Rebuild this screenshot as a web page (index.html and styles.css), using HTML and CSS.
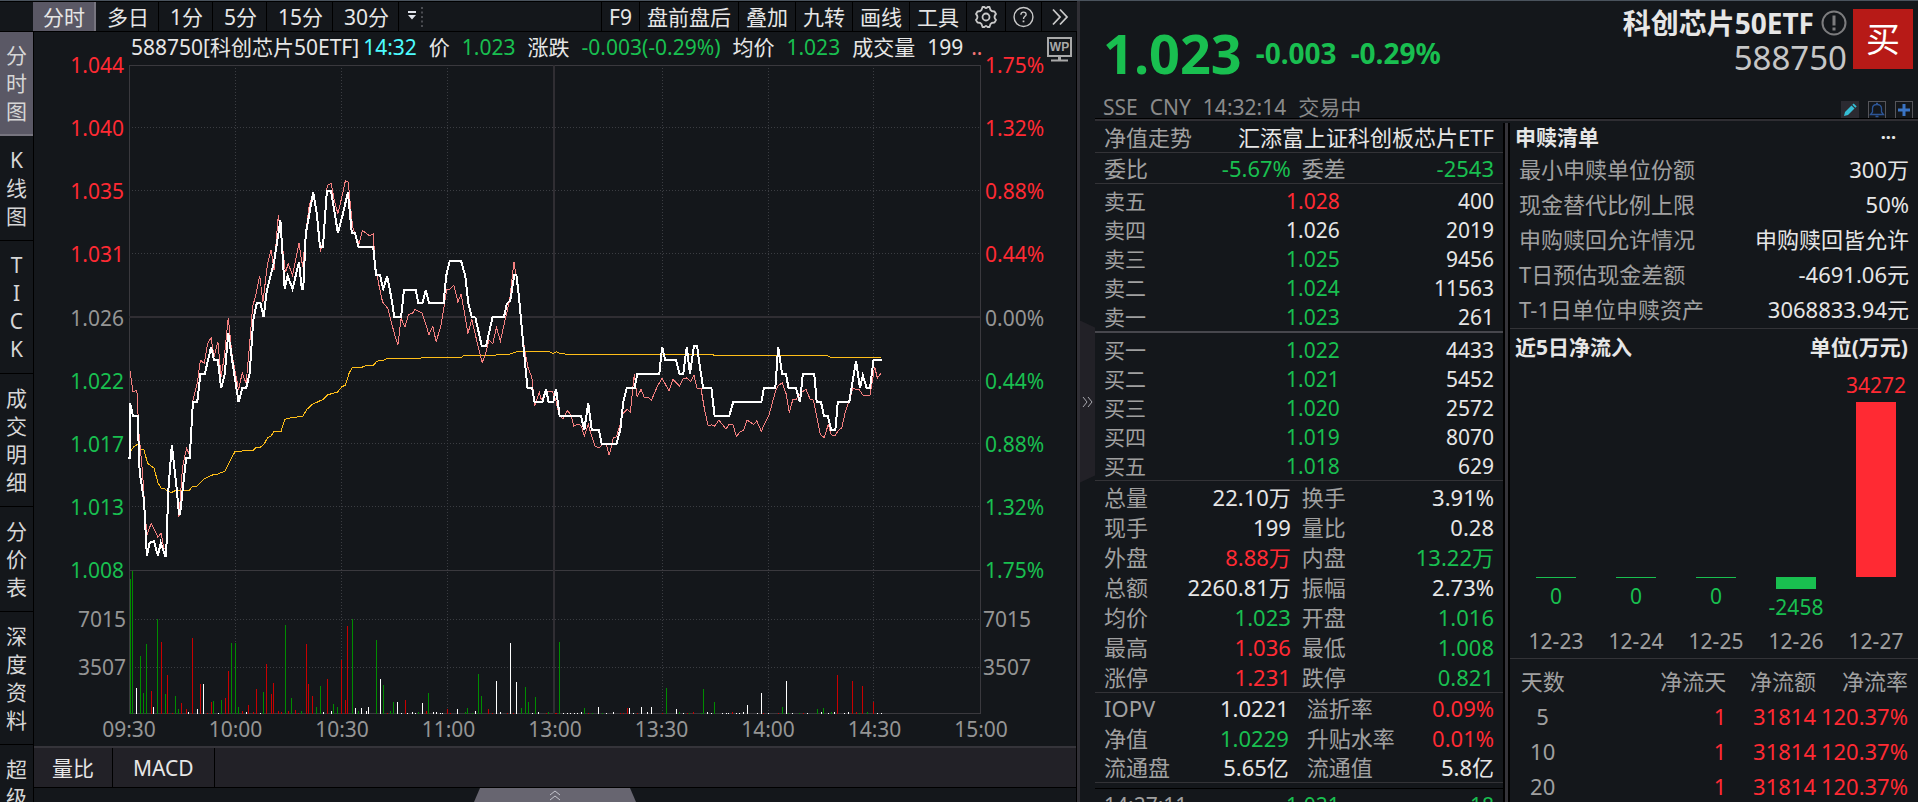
FILE: index.html
```
<!DOCTYPE html>
<html lang="zh-CN">
<head>
<meta charset="utf-8">
<title>588750 科创芯片50ETF</title>
<link rel="stylesheet" href="styles.css">
</head>
<body>
<div class="app">

<main class="left">
  <nav class="toolbar">
    <button class="tab active">分时</button><button class="tab">多日</button><button class="tab">1分</button><button class="tab">5分</button><button class="tab">15分</button><button class="tab">30分</button>
    <button class="more-periods" aria-label="更多周期"><svg width="18" height="22" viewBox="0 0 18 22"><path d="M1 5h8v2H1zM1 9h8L5 13.500z" fill="#dfe3ea"/><path d="M15 1v22" stroke="#4b4d52" stroke-width="2" stroke-dasharray="2 2.500"/></svg></button>
    <span class="spacer"></span>
    <button class="tool">F9</button><button class="tool">盘前盘后</button><button class="tool">叠加</button><button class="tool">九转</button><button class="tool">画线</button><button class="tool">工具</button>
    <button class="tool icon settings" aria-label="设置"><svg width="24" height="24" viewBox="0 0 24 24" fill="none" stroke="#c9c9c9" stroke-width="1.800" stroke-linejoin="round"><path d="M8.500 2h2c1 1.500 2 1.500 3 0h2l1 3c.7 1.200 1.500 1.500 4 1.500l1.500 2.500c-2 2-2 4 0 6L20.500 17.500c-2.500 0-3.300.4-4 1.500l-1 3h-2c-1-1.500-2-1.500-3 0h-2l-1-3c-.7-1.100-1.500-1.500-4-1.500L2 15c2-2 2-4 0-6l1.500-2.500c2.500 0 3.300-.3 4-1.500z"/><circle cx="12" cy="12" r="3.500"/></svg></button>
    <button class="tool icon" aria-label="帮助"><svg width="24" height="24" viewBox="0 0 24 24" fill="none" stroke="#c9c9c9" stroke-width="1.600"><circle cx="12" cy="12" r="10.800"/><path d="M9 9.500c0-4 6-4 6-.5 0 2.200-3 2.300-3 5.200"/><path d="M12 16v2" stroke-width="2"/></svg></button>
    <button class="tool icon" aria-label="展开"><svg width="18" height="18" viewBox="0 0 18 18" fill="none" stroke="#c9c9c9" stroke-width="1.800"><path d="M2 1.500 9 9l-7 7.500M9 1.500 16 9l-7 7.500"/></svg></button>
  </nav>

  <div class="work">
    <nav class="side">
      <button class="side-tab active">分<br>时<br>图</button>
      <button class="side-tab">K<br>线<br>图</button>
      <button class="side-tab">T<br>I<br>C<br>K</button>
      <button class="side-tab">成<br>交<br>明<br>细</button>
      <button class="side-tab">分<br>价<br>表</button>
      <button class="side-tab">深<br>度<br>资<br>料</button>
      <button class="side-tab">超<br>级</button>
    </nav>

    <section class="stage">
      <div class="info">
        <span class="info-name">588750[科创芯片50ETF]</span>
        <span class="cyan">14:32</span>
        <span>价</span><span class="down">1.023</span>
        <span>涨跌</span><span class="down">-0.003(-0.29%)</span>
        <span>均价</span><span class="down">1.023</span>
        <span>成交量</span><span>199</span><span class="salmon">..</span>
        <svg class="wp" width="25" height="25" viewBox="0 0 25 25"><rect x="1" y="1" width="23" height="18" fill="none" stroke="#a9a9a9" stroke-width="2"/><path d="M11 20h3v3h-3zM4 22.500h17v2H4z" fill="#a9a9a9"/><text x="12.500" y="14" text-anchor="middle">WP</text></svg>
      </div>

      <div class="chart">
        <div class="axis price left-axis"><span class="up">1.044</span><span class="up">1.040</span><span class="up">1.035</span><span class="up">1.031</span><span>1.026</span><span class="down">1.022</span><span class="down">1.017</span><span class="down">1.013</span><span class="down">1.008</span></div>
        <div class="axis volume left-axis"><span>7015</span><span>3507</span></div>

        <svg class="plot" viewBox="0 0 2386 1950" preserveAspectRatio="none" role="img" aria-label="分时走势">
          <path class="dots" d="M0 189H2384M0 378H2384M0 567H2384M0 948H2384M0 1137H2384M0 1326H2384M0 1665H2384M0 1809H2384M297 0V1950M594 0V1950M891 0V1950M1493 0V1950M1790 0V1950M2086 0V1950"/>
          <path class="frame" d="M0 1950V0H2384V1950ZM0 1518H2384"/>
          <path class="mid" d="M0 758H2384M1190 0V1950"/>
          <g transform="translate(-362 1487)">
            <path class="vol-down" d="M365 57V463M373 33V463M393 288V463M404 399V463M412 252V463M443 177V463M463 402V463M491 408V463M502 447V463M600 423V463M620 420V463M650 249V463M659 249V463M670 441V463M740 396V463M799 195V463M818 414V463M846 453V463M886 441V463M897 378V463M936 432V463M947 441V463M987 177V463M1005 453V463M1054 240V463M1074 375V463M1093 453V463M1104 426V463M1174 456V463M1202 399V463M1303 456V463M1311 444V463M1323 459V463M1342 342V463M1350 408V463M1460 444V463M1471 381V463M1480 426V463M1499 411V463M1538 456V463"/>
            <path class="vol-up" d="M424 393V463M452 246V463M471 345V463M483 459V463M510 429V463M522 447V463M541 234V463M561 372V463M581 459V463M592 426V463M631 414V463M640 333V463M679 453V463M698 435V463M710 456V463M718 387V463M748 312V463M760 402V463M768 369V463M780 453V463M788 456V463M808 453V463M827 450V463M838 459V463M858 252V463M866 372V463M877 408V463M917 357V463M956 300V463M967 420V463M975 198V463M1085 459V463M1135 420V463M1194 453V463M1253 447V463M1262 459V463M1370 447V463M1381 459V463M1421 459V463M1440 459V463M1530 459V463M1557 459V463"/>
            <path class="vol-flat" d="M384 384V463M432 441V463M530 456V463M553 447V463M572 372V463M612 459V463M690 456V463M730 459V463M906 456V463M928 453V463M995 444V463M1014 444V463M1026 453V463M1034 441V463M1065 357V463M1115 426V463M1124 459V463M1143 459V463M1155 456V463M1163 459V463M1183 429V463M1214 456V463M1222 456V463M1233 459V463M1241 459V463M1283 447V463M1331 453V463M1390 363V463M1401 456V463M1429 249V463M1448 366V463M1491 459V463M1510 456V463"/>
          </g>
          <g transform="translate(1150 1487)">
            <path class="vol-down" d="M26 456V463M57 246V463M125 444V463M147 459V463M175 459V463M354 384V463M393 456V463M421 459V463M452 459V463M460 387V463M491 426V463M679 441V463M698 459V463M729 459V463M777 447V463M796 444V463M816 456V463M897 459V463M917 456V463"/>
            <path class="vol-up" d="M18 459V463M46 459V463M136 459V463M226 459V463M234 459V463M245 444V463M273 459V463M343 459V463M413 459V463M432 456V463M541 456V463M628 459V463M668 459V463M738 459V463M835 345V463M877 363V463M886 456V463M905 378V463M936 426V463"/>
            <path class="vol-flat" d="M66 459V463M77 459V463M86 459V463M97 459V463M105 459V463M116 456V463M166 441V463M186 459V463M206 456V463M253 444V463M264 459V463M284 441V463M303 456V463M312 441V463M382 447V463M402 459V463M471 456V463M480 459V463M511 459V463M522 459V463M530 459V463M550 459V463M561 459V463M570 456V463M581 435V463M609 459V463M620 399V463M640 459V463M690 363V463M709 459V463M749 459V463M788 456V463M808 459V463M827 456V463M855 459V463M866 456V463M945 459V463M956 459V463"/>
          </g>
          <g transform="translate(-362 -193)">
            <polyline class="avg" points="368,1352 375,1340 386,1333 395,1348 404,1350 414,1390 432,1404 443,1448 452,1464 462,1466 472,1475 482,1477 495,1470 531,1470 541,1459 553,1458 573,1436 600,1423 611,1422 631,1413 659,1354 709,1351 718,1342 730,1341 740,1333 750,1313 760,1308 768,1294 788,1294 798,1258 818,1252 848,1249 860,1228 875,1213 907,1197 918,1184 946,1176 958,1160 968,1155 978,1120 987,1102 1013,1102 1023,1097 1046,1096 1056,1083 1072,1081 1082,1076 1178,1076 1180,1072 1292,1072 1300,1066 1388,1066 1391,1063 1425,1063 1449,1054 1542,1055"/>
            <polyline class="iopv" points="365,1114 373,1175 384,1170 390,1300 400,1420 406,1520 412,1606 424,1570 443,1612 452,1600 460,1648 466,1640 472,1480 482,1340 494,1440 502,1550 512,1400 523,1345 531,1362 541,1200 553,1150 562,1080 573,1090 582,1030 592,1012 600,1070 611,1025 620,1130 630,1060 640,952 650,1060 669,1170 679,1118 690,1150 700,1030 708,920 718,880 728,826 737,905 750,790 760,748 768,810 780,645 790,720 800,816 808,790 820,825 838,728 848,800 857,700 866,620 878,575 888,650 898,754 908,710 917,555 928,549 937,600 947,640 958,590 968,541 976,545 988,680 1006,730 1016,690 1035,706 1046,700 1052,800 1063,860 1072,905 1087,925 1105,1000 1115,1034 1124,955 1135,980 1145,942 1155,940 1163,928 1183,938 1202,1003 1213,978 1222,1024 1235,980 1247,900 1252,868 1260,868 1272,855 1283,905 1292,882 1302,940 1311,1000 1322,958 1340,1040 1351,1088 1360,1062 1370,1020 1381,1030 1391,982 1402,1022 1415,960 1428,900 1440,784 1450,860 1458,940 1470,1050 1480,1105 1490,1130 1498,1217 1511,1175 1516,1198"/>
            <polyline class="last" points="360,1374 365,1374 365,1208 373,1248 386,1248 392,1418 404,1500 412,1668 420,1628 432,1624 443,1668 451,1628 463,1668 466,1668 472,1474 482,1334 495,1460 502,1542 505,1542 522,1374 532,1374 541,1206 553,1206 562,1122 574,1122 592,1040 600,1080 611,1080 620,1164 630,1122 640,998 655,1110 669,1206 679,1164 690,1164 700,1120 710,960 720,908 730,908 739,950 748,870 768,785 786,660 798,866 806,826 820,866 838,785 846,866 850,866 857,700 878,575 888,640 897,741 905,741 916,572 928,572 947,698 960,645 975,575 986,698 995,698 1005,741 1046,741 1054,825 1065,825 1074,866 1085,828 1098,900 1105,951 1124,951 1132,868 1165,868 1172,908 1184,908 1193,870 1202,908 1243,908 1250,828 1260,782 1292,782 1304,828 1312,908 1322,950 1332,952 1350,1038 1362,1038 1380,951 1412,951 1420,910 1430,900 1441,824 1447,824 1455,900 1465,1020 1478,1164 1491,1164 1498,1206 1520,1206"/>
          </g>
          <g transform="translate(1150 707)">
            <polyline class="avg" points="30,155 38,160 47,155 58,160 70,160 74,163 486,163 488,167 808,167 817,173 955,173"/>
            <polyline class="iopv" points="4,298 16,282 23,273 36,275 45,300 55,345 65,356 78,332 88,345 96,378 108,372 117,378 125,408 136,372 146,410 155,438 166,444 176,434 186,432 195,466 206,414 215,410 226,370 234,340 245,328 254,336 265,222 273,290 284,268 293,292 304,292 313,300 330,258 343,234 362,272 373,238 392,258 402,236 413,233 423,244 432,224 441,266 452,266 462,330 472,378 481,374 490,378 502,360 522,387 531,372 541,372 551,410 562,394 571,392 581,360 600,373 608,362 621,394 630,370 642,346 660,275 668,256 679,248 690,280 699,338 709,298 718,298 735,275 746,268 758,298 767,300 776,350 786,404 797,412 808,374 817,404 827,408 837,390 846,384 856,335 867,300 877,266 895,268 906,286 925,286 938,200 946,234 955,220"/>
            <polyline class="last" points="0,306 8,306 18,266 25,306 38,306 46,266 56,348 116,348 125,390 136,308 146,390 166,390 174,432 215,432 226,388 234,306 244,264 266,264 273,222 335,222 343,140 352,180 382,180 392,222 402,222 412,140 421,222 432,138 441,138 448,195 458,264 481,264 490,348 531,348 542,306 621,306 628,264 660,264 668,140 679,222 690,222 697,264 718,264 729,306 737,222 769,222 776,306 788,306 796,348 807,348 817,390 828,390 835,306 867,306 886,182 897,264 905,226 916,264 925,264 935,180 958,180"/>
          </g>
        </svg>

        <div class="axis price right-axis"><span class="up">1.75%</span><span class="up">1.32%</span><span class="up">0.88%</span><span class="up">0.44%</span><span>0.00%</span><span class="down">0.44%</span><span class="down">0.88%</span><span class="down">1.32%</span><span class="down">1.75%</span></div>
        <div class="axis volume right-axis"><span>7015</span><span>3507</span></div>
        <div class="times"><span>09:30</span><span>10:00</span><span>10:30</span><span>11:00</span><span>13:00</span><span>13:30</span><span>14:00</span><span>14:30</span><span>15:00</span></div>
      </div>

      <div class="indicators"><button>量比</button><button>MACD</button></div>
      <div class="drawer"><button class="pull" aria-label="展开副图"><svg width="12" height="12" viewBox="0 0 12 12" fill="none" stroke="#c4c4cc"><path d="M1 6l5-4 5 4M1 11l5-4 5 4"/></svg></button></div>
    </section>
  </div>
</main>

<div class="splitter"><button class="fold" aria-label="收起"><svg width="11" height="12" viewBox="0 0 11 12" fill="none" stroke="#a8a8ae"><path d="M1 1l4 5-4 5M6 1l4 5-4 5"/></svg></button></div>

<section class="right">
  <header class="head">
    <div class="quote">
      <div class="prices down"><strong class="big">1.023</strong><strong class="chg">-0.003</strong><strong class="chg">-0.29%</strong></div>
      <div class="status"><span>SSE</span><span>CNY</span><span>14:32:14</span><span>交易中</span></div>
    </div>
    <div class="ident">
      <div class="title-row">
        <div class="title">
          <h1>科创芯片50ETF <svg width="26" height="26" viewBox="0 0 26 26" fill="none" stroke="#7c7c7e" stroke-width="2"><circle cx="13" cy="13" r="11.500"/><path d="M13 5.500v10M13 17.500v3" stroke-width="3"/></svg></h1>
          <div class="code">588750</div>
        </div>
        <button class="buy">买</button>
      </div>
      <div class="actions">
        <button class="act edit" aria-label="编辑"><svg width="16" height="16" viewBox="0 0 16 16"><path d="M2 14l1-4 6.500-6.500 3 3L6 13z" fill="#35bcd3"/><path d="M10.300 2.700l1.400-1.300 3 3-1.400 1.300z" fill="#35bcd3"/></svg></button>
        <button class="act" aria-label="提醒"><svg width="16" height="16" viewBox="0 0 16 16" fill="none" stroke="#2c5596" stroke-width="1.300"><path d="M1.500 12.500h13l-2-2.500V6.500C12.500 4 10.500 2.500 8 2.500S3.500 4 3.500 6.500V10zM7 1.500h2M6.500 14.500h3"/></svg></button>
        <button class="act" aria-label="添加"><svg width="16" height="16" viewBox="0 0 16 16"><path d="M6.500 2h3v4.500H14v3H9.500V14h-3V9.500H2v-3h4.500z" fill="#3a74c4"/></svg></button>
      </div>
    </div>
  </header>

  <div class="panels">
    <div class="book">
      <div class="fund line"><span class="label">净值走势</span><span>汇添富上证科创板芯片ETF</span></div>
      <table class="stats line">
        <tr><th>委比</th><td class="down">-5.67%</td><th>委差</th><td class="down">-2543</td></tr>
      </table>
      <table class="depth asks">
        <tr><th>卖五</th><td class="up">1.028</td><td>400</td></tr>
        <tr><th>卖四</th><td>1.026</td><td>2019</td></tr>
        <tr><th>卖三</th><td class="down">1.025</td><td>9456</td></tr>
        <tr><th>卖二</th><td class="down">1.024</td><td>11563</td></tr>
        <tr><th>卖一</th><td class="down">1.023</td><td>261</td></tr>
      </table>
      <table class="depth bids line">
        <tr><th>买一</th><td class="down">1.022</td><td>4433</td></tr>
        <tr><th>买二</th><td class="down">1.021</td><td>5452</td></tr>
        <tr><th>买三</th><td class="down">1.020</td><td>2572</td></tr>
        <tr><th>买四</th><td class="down">1.019</td><td>8070</td></tr>
        <tr><th>买五</th><td class="down">1.018</td><td>629</td></tr>
      </table>
      <table class="stats totals line">
        <tr><th>总量</th><td>22.10万</td><th>换手</th><td>3.91%</td></tr>
        <tr><th>现手</th><td>199</td><th>量比</th><td>0.28</td></tr>
        <tr><th>外盘</th><td class="up">8.88万</td><th>内盘</th><td class="down">13.22万</td></tr>
        <tr><th>总额</th><td>2260.81万</td><th>振幅</th><td>2.73%</td></tr>
        <tr><th>均价</th><td class="down">1.023</td><th>开盘</th><td class="down">1.016</td></tr>
        <tr><th>最高</th><td class="up">1.036</td><th>最低</th><td class="down">1.008</td></tr>
        <tr><th>涨停</th><td class="up">1.231</td><th>跌停</th><td class="down">0.821</td></tr>
      </table>
      <table class="stats nav line">
        <tr><th>IOPV</th><td>1.0221</td><th>溢折率</th><td class="up">0.09%</td></tr>
        <tr><th>净值</th><td class="down">1.0229</td><th>升贴水率</th><td class="up">0.01%</td></tr>
        <tr><th>流通盘</th><td>5.65亿</td><th>流通值</th><td>5.8亿</td></tr>
      </table>
      <table class="depth ticks">
        <tr><th>14:27:11</th><td class="down">1.021</td><td class="down">18</td></tr>
      </table>
    </div>

    <div class="gutter"></div>

    <div class="flow">
      <section class="redeem line">
        <h2>申赎清单 <button class="dots-btn" aria-label="更多">···</button></h2>
        <table>
          <tr><th>最小申赎单位份额</th><td>300万</td></tr>
          <tr><th>现金替代比例上限</th><td>50%</td></tr>
          <tr><th>申购赎回允许情况</th><td>申购赎回皆允许</td></tr>
          <tr><th>T日预估现金差额</th><td>-4691.06元</td></tr>
          <tr><th>T-1日单位申赎资产</th><td>3068833.94元</td></tr>
        </table>
      </section>
      <section class="inflow line">
        <h2>近5日净流入 <span>单位(万元)</span></h2>
        <div class="bars">
          <div class="day"><div class="pos"></div><div class="neg down"><i class="bar" style="height:1px"></i>0</div><span class="date">12-23</span></div>
          <div class="day"><div class="pos"></div><div class="neg down"><i class="bar" style="height:1px"></i>0</div><span class="date">12-24</span></div>
          <div class="day"><div class="pos"></div><div class="neg down"><i class="bar" style="height:1px"></i>0</div><span class="date">12-25</span></div>
          <div class="day"><div class="pos"></div><div class="neg down"><i class="bar" style="height:12px"></i>-2458</div><span class="date">12-26</span></div>
          <div class="day"><div class="pos up">34272<i class="bar" style="height:175px"></i></div><div class="neg"></div><span class="date">12-27</span></div>
        </div>
      </section>
      <table class="days">
        <tr><th>天数</th><th>净流天</th><th>净流额</th><th>净流率</th></tr>
        <tr><td>5</td><td>1</td><td>31814</td><td>120.37%</td></tr>
        <tr><td>10</td><td>1</td><td>31814</td><td>120.37%</td></tr>
        <tr><td>20</td><td>1</td><td>31814</td><td>120.37%</td></tr>
      </table>
    </div>
  </div>
</section>
</div>
</body>
</html>
```
FILE: styles.css
```
* { box-sizing: border-box; }
body {
  margin: 0;
  background: #14171b;
  color: #e6e6e6;
  font: 21px/28px "Noto Sans", "Noto Sans CJK SC", sans-serif;
  overflow: hidden;
}
button { margin: 0; padding: 0; border: 0; background: none; color: inherit; font: inherit; }
svg { display: block; }
table { width: 100%; border-collapse: collapse; table-layout: fixed; }
th { padding: 0; font-weight: 400; text-align: left; color: #a0a0a0; white-space: nowrap; }
td { padding: 0; text-align: right; white-space: nowrap; }
h1, h2 { margin: 0; }
.up { color: #ff2a33; }
.down { color: #19bf50; }
.cyan { color: #4dfbff; }
.salmon { color: #f47474; }

.app {
  display: grid;
  grid-template-columns: minmax(0, 1077fr) 18px minmax(0, 823fr);
  height: 100vh;
  border-top: 1px solid #4a535d;
  overflow: hidden;
}
.left { display: flex; flex-direction: column; min-width: 0; min-height: 0; }

/* toolbar */
.toolbar { display: flex; height: 31px; padding-left: 33px; border-bottom: 1px solid #000; border-top: 1px solid #000; line-height: 26px; }
.tab { padding: 0 9px 0 10px; border-right: 1px solid #000; border-left: 1px solid transparent; }
.tab.active { padding: 0 9px; background: #5a5865; border-right: 2px solid #77757f; }
.more-periods { padding: 3px 8px; }
.spacer { flex: 1; }
.tool { padding: 0 7px; border-left: 1px solid #000; }
.tool.icon { display: flex; align-items: center; justify-content: center; width: 36px; }
.tool.settings { width: 39px; }

/* left navigation */
.work { flex: 1; display: flex; min-height: 0; }
.side { flex: none; width: 34px; overflow: hidden; border-right: 1px solid #000; }
.side-tab { display: block; width: 100%; padding: 10px 0; border-bottom: 1px solid #000; color: #d6d6d6; }
.side-tab.active { background: #5a5865; border-bottom: 2px solid #77757f; padding: 9px 0; }

/* intraday chart */
.stage { flex: 1; display: flex; flex-direction: column; min-width: 0; border-right: 1px solid #000; }
.info { display: flex; gap: 12px; height: 33px; padding: 1px 4px 0 97px; white-space: nowrap; }
.info-name { margin-right: -8px; }
.info .salmon { margin-left: -4px; }
.wp { margin: 4px 0 0 auto; }
.wp text { font: 700 12px "Liberation Sans", sans-serif; fill: #a9a9a9; }
.chart { flex: 1; display: grid; min-height: 0; grid-template-columns: 95px minmax(0, 1fr) 95px; grid-template-rows: 506fr 144fr 32px; }
.plot { grid-column: 2; grid-row: 1 / 3; width: 100%; height: 100%; min-height: 0; overflow: visible; }
.plot path, .plot polyline { fill: none; vector-effect: non-scaling-stroke; stroke-width: 1px; shape-rendering: crispEdges; }
.plot .dots { stroke: #3b3d42; stroke-dasharray: 1 2; }
.plot .frame { stroke: #3a393e; }
.plot .mid { stroke: #302e33; stroke-width: 2px; }
.plot .vol-down { stroke: #008c00; }
.plot .vol-up { stroke: #c80000; }
.plot .vol-flat { stroke: #fff; }
.plot .avg { stroke: #ffbe19; }
.plot .iopv { stroke: #f58080; }
.plot .last { stroke: #fff; stroke-width: 2px; }
.axis { color: #959595; min-height: 0; }
.axis.price { grid-row: 1; display: flex; flex-direction: column; justify-content: space-between; margin: -14px 0; }
.axis.volume { grid-row: 2; display: grid; grid-template-rows: 49fr 48fr 47fr; }
.axis.volume span { align-self: end; margin-bottom: -14px; }
.axis .up { color: #ff2a33; }
.axis .down { color: #19bf50; }
.left-axis { grid-column: 1; padding-right: 5px; text-align: right; }
.left-axis.volume { padding-right: 3px; }
.right-axis { grid-column: 3; padding-left: 4px; }
.right-axis.volume { padding-left: 2px; }
.times { grid-column: 2; grid-row: 3; display: flex; justify-content: space-between; margin: 1px -30px 0; color: #959595; }
.times span { width: 60px; text-align: center; }
.indicators { display: flex; flex: none; height: 42px; background: #222127; border-top: 2px solid #35343a; border-bottom: 1px solid #000; }
.indicators button { padding: 0 18px; border-right: 1px solid #000; }
.indicators button + button { padding: 0 20px; }
.drawer { flex: none; display: flex; justify-content: center; height: 14px; }
.pull { display: flex; justify-content: center; align-items: center; width: 162px; background: #676570; clip-path: polygon(6px 0, 156px 0, 100% 100%, 0 100%); }

/* splitter */
.splitter { display: flex; align-items: center; border-left: 3px solid #302f35; }
.fold { display: flex; align-items: center; justify-content: center; width: 15px; height: 162px; background: #222127; clip-path: polygon(0 0, 100% 7px, 100% 155px, 0 100%); }

/* quote header */
.right { display: flex; flex-direction: column; min-width: 0; min-height: 0; }
.head { flex: none; display: flex; justify-content: space-between; height: 118px; overflow: hidden; border-bottom: 1px solid #000; }
.quote { padding-left: 8px; }
.prices { display: flex; align-items: center; gap: 14px; height: 94px; padding-top: 10px; }
.big { font-size: 54px; line-height: 60px; }
.chg { font-size: 28px; line-height: 32px; }
.status { display: flex; gap: 12px; line-height: 24px; color: #8a8a8a; }
.ident { padding: 7px 5px 0 0; }
.title-row { display: flex; gap: 6px; }
.title { text-align: right; }
.title h1 { display: flex; align-items: center; gap: 7px; font-size: 28px; line-height: 30px; }
.code { font-size: 33px; line-height: 40px; color: #c6c6c6; }
.buy { width: 60px; height: 60px; margin-top: 1px; background: #b71a17; color: #fff; font-size: 34px; }
.actions { display: flex; justify-content: flex-end; gap: 9px; margin-top: 23px; }
.act { display: flex; align-items: center; justify-content: center; width: 18px; height: 18px; border: 1px solid #55555a; }
.act.edit { background: #2b2a31; border-color: #2b2a31; }

/* quote panels */
.panels { flex: 1; display: grid; grid-template-columns: minmax(0, 1fr) 7px minmax(0, 1fr); min-height: 0; border-top: 2px solid #2f2e33; padding-top: 2px; }
.gutter { border: solid #000; border-width: 0 2px; background: #35343a; }
.line { border-bottom: 1px solid #333337; }
.book { min-width: 0; }
.fund { display: flex; justify-content: space-between; height: 30px; padding: 0 9px; font-size: 22px; white-space: nowrap; }
.label { color: #a0a0a0; }
.stats { font-size: 22px; }
.stats tr { height: 30px; }
.stats th:first-child { width: 20%; padding-left: 9px; }
.stats td { width: 28%; }
.stats th:nth-child(3) { width: 24%; padding-left: 11px; }
.stats td:last-child { padding-right: 9px; }
.nav td:nth-child(2) { padding-right: 2px; }
.stats.nav th:nth-child(3) { width: 26%; padding-left: 16px; }
.stats.nav td:last-child { width: 26%; }
.depth tr { height: 29px; }
.depth th { width: 30%; padding-left: 9px; }
.depth td:nth-child(2) { width: 30%; }
.depth td:last-child { padding-right: 9px; }
.asks { margin-top: 3px; border-bottom: 2px solid #47474d; }
.bids { margin-top: 3px; }
.totals { margin-top: 1px; }
.ticks { margin: 5px 0 0; border-top: 1px solid #000; line-height: 32px; }

/* creation and redemption, net inflow */
.flow { min-width: 0; }
.flow h2 { display: flex; justify-content: space-between; padding: 0 10px 0 5px; font-size: 21px; line-height: 28px; }
.dots-btn { padding-right: 12px; font-size: 18px; line-height: 28px; }
.redeem { height: 206px; font-size: 22px; }
.redeem tr { height: 35px; }
.redeem th { width: 52%; padding-left: 9px; }
.redeem td { padding-right: 9px; }
.inflow { padding-top: 4px; height: 330px; }
.bars { display: flex; padding: 0 2px 0 6px; }
.day { flex: 1; display: flex; flex-direction: column; align-items: center; text-align: center; }
.pos { display: flex; flex-direction: column; justify-content: flex-end; align-items: center; height: 216px; gap: 3px; }
.neg { display: flex; flex-direction: column; align-items: center; height: 50px; gap: 4px; }
.bar { display: block; width: 40px; background: currentColor; }
.date { color: #a0a0a0; }
.days { margin-top: 4px; font-size: 22px; color: #ff2a33; }
.days tr { height: 35px; }
.days th, .days td { text-align: right; }
.days tr > :first-child { width: 16%; text-align: center; color: #a0a0a0; }
.days tr > :nth-child(2) { width: 37%; }
.days tr > :nth-child(3) { width: 22%; }
.days tr > :last-child { padding-right: 10px; }
```
